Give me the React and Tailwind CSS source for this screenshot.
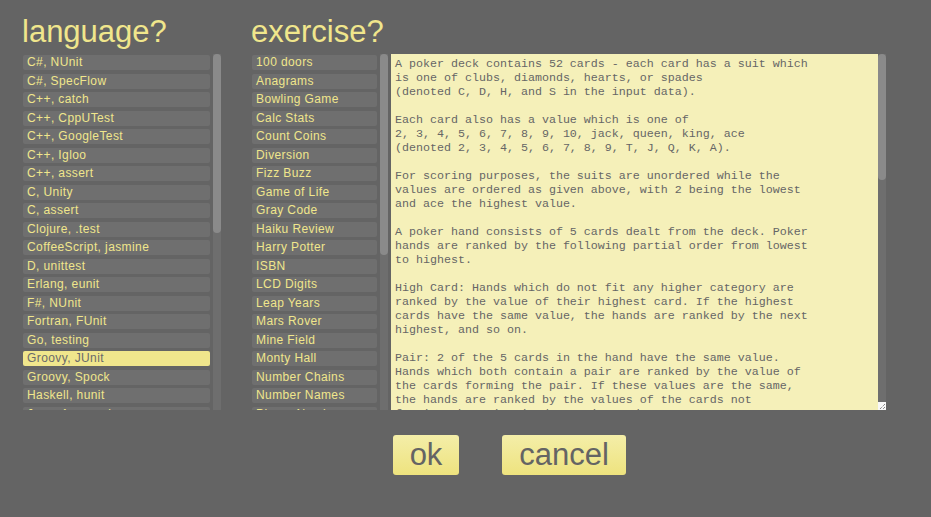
import React from "react";

const languages = [
  "C#, NUnit", "C#, SpecFlow", "C++, catch", "C++, CppUTest", "C++, GoogleTest",
  "C++, Igloo", "C++, assert", "C, Unity", "C, assert", "Clojure, .test",
  "CoffeeScript, jasmine", "D, unittest", "Erlang, eunit", "F#, NUnit", "Fortran, FUnit",
  "Go, testing", "Groovy, JUnit", "Groovy, Spock", "Haskell, hunit", "Java, Approval",
  "Java, Cucumber", "Java, JMock", "Java, JUnit", "Java, Mockito", "Java, PowerMockito",
  "Javascript, assert", "Javascript, jasmine", "PHP, PHPUnit", "Perl, Test::Simple",
  "Python, pytest", "Python, unittest", "R, RUnit", "Ruby, Approval", "Ruby, Cucumber",
  "Ruby, Rspec", "Ruby, Test::Unit", "Scala, scalatest", "Bash, shunit2",
];

const exercises = [
  "100 doors", "Anagrams", "Bowling Game", "Calc Stats", "Count Coins", "Diversion",
  "Fizz Buzz", "Game of Life", "Gray Code", "Haiku Review", "Harry Potter", "ISBN",
  "LCD Digits", "Leap Years", "Mars Rover", "Mine Field", "Monty Hall", "Number Chains",
  "Number Names", "Phone Numbers", "Poker Hands", "Prime Factors", "Print Diamond",
  "Recently Used List", "Reverse Roman", "Roman Numerals", "Saddle Points", "Tennis",
  "Unsplice", "Wonderland Number", "Word Wrap", "Yatzy", "Yatzy Cutdown", "Zeckendorf Number",
];

const instructions = `A poker deck contains 52 cards - each card has a suit which
is one of clubs, diamonds, hearts, or spades
(denoted C, D, H, and S in the input data).

Each card also has a value which is one of
2, 3, 4, 5, 6, 7, 8, 9, 10, jack, queen, king, ace
(denoted 2, 3, 4, 5, 6, 7, 8, 9, T, J, Q, K, A).

For scoring purposes, the suits are unordered while the
values are ordered as given above, with 2 being the lowest
and ace the highest value.

A poker hand consists of 5 cards dealt from the deck. Poker
hands are ranked by the following partial order from lowest
to highest.

High Card: Hands which do not fit any higher category are
ranked by the value of their highest card. If the highest
cards have the same value, the hands are ranked by the next
highest, and so on.

Pair: 2 of the 5 cards in the hand have the same value.
Hands which both contain a pair are ranked by the value of
the cards forming the pair. If these values are the same,
the hands are ranked by the values of the cards not
forming the pair, in decreasing order.

Two Pairs: The hand contains 2 different pairs. Hands
which both contain 2 pairs are ranked by the value of
their highest pair. Hands with the same highest pair
are ranked by the value of their other pair. If these
values are the same the hands are ranked by the value
of the remaining card.

Three of a Kind: Three of the cards in the hand have the
same value. Hands which both contain three of a kind are
ranked by the value of the 3 cards.

Straight: Hand contains 5 cards with consecutive values.
Hands which both contain a straight are ranked by their
highest card.

Flush: Hand contains 5 cards of the same suit. Hands which
are both flushes are ranked using the rules for High Card.

Full House: 3 cards of the same value, with the remaining 2
cards forming a pair. Ranked by the value of the 3 cards.

Four of a kind: 4 cards with the same value. Ranked by the
value of the 4 cards.

Straight flush: 5 cards of the same suit with consecutive
values. Ranked by the highest card in the hand.

Your job is to rank pairs of poker hands and indicate
which, if either, has a higher rank.`;

function Item({ label, selected }) {
  return (
    <div
      className={
        "h-[15px] shrink-0 mb-[3.5px] rounded-[2px] pl-[4px] text-[12px] leading-[15px] tracking-[0.4px] whitespace-nowrap overflow-hidden " +
        (selected ? "bg-[#f0e68c] text-[#6a6a6a]" : "bg-[#6f6f6f] text-[#f0e68c]")
      }
    >
      {label}
    </div>
  );
}

function Track({ thumb, children }) {
  return (
    <div className="w-[8px] h-[356px] shrink-0 bg-[#6e6e6e] flex flex-col">
      <div className={"w-[8px] rounded-[4px] bg-[#8a8a8a] " + thumb} />
      <div className="flex-1" />
      {children}
    </div>
  );
}

export default function App() {
  return (
    <div
      className="min-h-[517px] bg-[#646464] pt-[16px] pl-[22px]"
      style={{ fontFamily: '"Liberation Sans", Arial, sans-serif' }}
    >
      <div className="flex items-start">
        <div className="w-[199px]">
          <div className="h-[31px] text-[31px] leading-[31px] text-[#f0e68c]">language?</div>
          <div className="mt-[7px] flex">
            <div className="w-[191px] h-[356px] overflow-hidden pt-[1px] pl-[1px] pr-[3px] flex flex-col">
              {languages.map((l) => (
                <Item key={l} label={l} selected={l === "Groovy, JUnit"} />
              ))}
            </div>
            <Track thumb="h-[179px]" />
          </div>
        </div>
        <div className="ml-[30px] w-[137px]">
          <div className="h-[31px] text-[31px] leading-[31px] text-[#f0e68c]">exercise?</div>
          <div className="mt-[7px] flex">
            <div className="w-[129px] h-[356px] overflow-hidden pt-[1px] pl-[1px] pr-[3px] flex flex-col">
              {exercises.map((e) => (
                <Item key={e} label={e} />
              ))}
            </div>
            <Track thumb="h-[201px]" />
          </div>
        </div>
        <div className="ml-[3px] mt-[38px] flex">
          <div
            className="w-[487px] h-[356px] overflow-hidden bg-[#f5f0b9] text-[#666666] text-[11.67px] leading-[14px] pt-[3px] pl-[4px] whitespace-pre"
            style={{ fontFamily: '"Liberation Mono", monospace' }}
          >
            {instructions}
          </div>
          <Track thumb="h-[126px]">
            <div className="w-[8px] h-[8px] bg-[#f8f8f8] flex items-center justify-center">
              <svg width="8" height="8" viewBox="0 0 8 8">
                <path d="M7 2 L2 7 M7 5 L5 7" stroke="#555" strokeWidth="1" strokeDasharray="1 1" fill="none" />
              </svg>
            </div>
          </Track>
        </div>
      </div>
      <div className="flex mt-[25px] ml-[371px] gap-[43px]">
        <button className="h-[40px] w-[66px] rounded-[3px] bg-gradient-to-b from-[#f4eea8] to-[#eee37e] text-[31px] leading-[40px] text-[#646464]">
          ok
        </button>
        <button className="h-[40px] w-[124px] rounded-[3px] bg-gradient-to-b from-[#f4eea8] to-[#eee37e] text-[31px] leading-[40px] text-[#646464]">
          cancel
        </button>
      </div>
    </div>
  );
}
